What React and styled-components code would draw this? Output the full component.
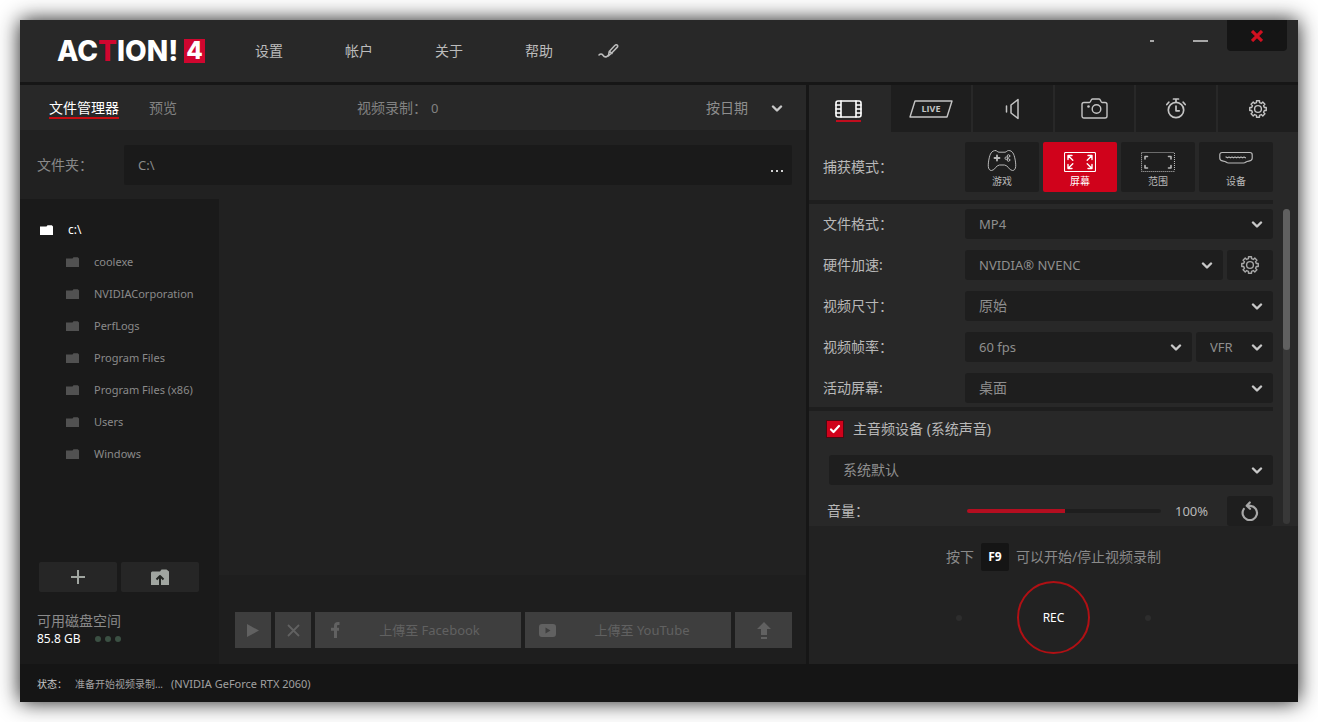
import React, { useState } from "react";
import styled, { createGlobalStyle, css } from "styled-components";

const Global = createGlobalStyle`
  *, *::before, *::after { box-sizing: border-box; }
  body {
    margin: 0;
    background: #fff;
    font-family: "Noto Sans", "Noto Sans CJK SC", sans-serif;
    font-size: 14px;
    line-height: 20px;
    color: #b8b8b8;
  }
  button, input, select {
    font: inherit;
    color: inherit;
    border: 0;
    padding: 0;
    margin: 0;
    background: none;
    border-radius: 0;
  }
  svg { display: block; flex: none; }
`;

const Page = styled.div`
  min-height: 100vh;
  padding: 20px;
  display: flex;
`;

const Window = styled.div`
  flex: 1;
  min-width: 0;
  display: flex;
  flex-direction: column;
  background: #212121;
  box-shadow: 0 0 20px rgba(0, 0, 0, 0.9);
`;

/* ---------- header ---------- */

const Header = styled.header`
  display: flex;
  align-items: center;
  height: 65px;
  padding-left: 37px;
  background: #282828;
  border-bottom: 3px solid #161616;
`;

const Logo = styled.div`
  display: flex;
  align-items: center;
  width: 148px;
  color: #fff;
  font-family: Inter, Roboto, sans-serif;
  font-size: 28px;
  font-weight: 800;
  line-height: 24px;
  em { color: #d0062f; font-style: normal; }
`;

const LogoBadge = styled.span`
  width: 21px;
  height: 24px;
  margin-left: auto;
  background: #d0062f;
  font-size: 24px;
  text-align: center;
`;

const Nav = styled.nav`
  display: flex;
  align-items: center;
  margin-left: 19px;
`;

const NavLink = styled.a`
  display: flex;
  justify-content: center;
  width: ${(p) => (p.$narrow ? 48 : 90)}px;
  color: #bcbcbc;
  text-decoration: none;
`;

const WindowControls = styled.div`
  align-self: flex-start;
  display: flex;
  margin-left: auto;
  margin-right: 11px;
`;

const WindowButton = styled.button`
  display: flex;
  align-items: center;
  justify-content: center;
  width: 48px;
  height: 42px;
  color: #a8a8a8;
  ${(p) =>
    p.$close &&
    css`
      width: 60px;
      height: 31px;
      margin-left: 3px;
      background: #151515;
      border-radius: 0 0 4px 4px;
      color: #d01020;
    `}
`;

/* ---------- body ---------- */

const Body = styled.div`
  flex: 1;
  display: flex;
`;

const Library = styled.section`
  flex: 1;
  min-width: 0;
  display: flex;
  flex-direction: column;
  border-right: 3px solid #161616;
`;

const LibraryBar = styled.div`
  display: flex;
  align-items: center;
  height: 45px;
  padding: 0 21px 0 29px;
  background: #282828;
  color: #828282;
`;

const TabList = styled.div`
  display: flex;
  gap: 30px;
`;

const TextTab = styled.button`
  line-height: 22px;
  color: #828282;
  &[aria-selected="true"] {
    color: #fff;
    box-shadow: inset 0 -2px #c80d12;
  }
`;

const Counter = styled.div`
  display: flex;
  gap: 4px;
  margin: 0 auto 0 180px;
  span + span { font-size: 13px; }
`;

const PathRow = styled.div`
  display: flex;
  align-items: center;
  height: 69px;
  padding: 0 14px 0 17px;
  color: #8a8a8a;
  label { width: 87px; }
`;

const PathField = styled.div`
  flex: 1;
  display: flex;
  height: 40px;
  border-radius: 2px;
  background: #1a1a1a;
  input {
    flex: 1;
    min-width: 0;
    padding-left: 14px;
    font-size: 13px;
  }
  button {
    display: flex;
    align-items: center;
    padding: 13px 8px 0;
    color: #d0d0d0;
  }
`;

const LibraryBody = styled.div`
  flex: 1;
  display: flex;
`;

const Sidebar = styled.aside`
  display: flex;
  flex-direction: column;
  width: 199px;
  padding-top: 15px;
  background: #1a1a1a;
`;

const Tree = styled.ul`
  flex: 1;
  margin: 0;
  padding: 0;
  list-style: none;
`;

const TreeItem = styled.li`
  display: flex;
  align-items: center;
  gap: 15px;
  height: 32px;
  padding-left: ${(p) => (p.$root ? 20 : 46)}px;
  font-size: ${(p) => (p.$root ? 12 : 11)}px;
  color: ${(p) => (p.$root ? "#fff" : "#8a8a8a")};
  svg { color: ${(p) => (p.$root ? "#fff" : "#515151")}; }
`;

const FolderButtons = styled.div`
  display: flex;
  gap: 4px;
  padding: 0 20px 0 19px;
`;

const FolderButton = styled.button`
  flex: 1;
  display: flex;
  align-items: center;
  justify-content: center;
  height: 30px;
  border-radius: 2px;
  background: #262626;
  color: #a0a5a0;
`;

const DiskSpace = styled.div`
  padding: 19px 17px 17px;
  color: #8a8a8a;
`;

const DiskValue = styled.div`
  display: flex;
  align-items: center;
  gap: 15px;
  line-height: 16px;
  font-size: 12px;
  color: #fff;
`;

const Dots = styled.span`
  display: flex;
  gap: 4px;
  i {
    width: 6px;
    height: 6px;
    border-radius: 3px;
    background: #3b5043;
  }
`;

const Content = styled.div`
  flex: 1;
  min-width: 0;
  display: flex;
  flex-direction: column;
`;

const FileArea = styled.div`
  flex: 1;
`;

const ActionBar = styled.div`
  display: flex;
  gap: 4px;
  padding: 37px 14px 16px 16px;
  background: #1e1e1e;
`;

const ActionButton = styled.button`
  display: flex;
  align-items: center;
  justify-content: center;
  width: ${(p) => p.$width || 36}px;
  height: 36px;
  background: #3e3e3e;
  color: #616161;
`;

const UploadButton = styled(ActionButton)`
  flex: 1;
  padding: 0 14px;
  font-family: "Noto Sans", "Noto Sans CJK TC", sans-serif;
  font-size: 13px;
  span {
    flex: 1;
    padding-left: 11px;
  }
`;

/* ---------- recorder ---------- */

const Recorder = styled.section`
  display: flex;
  flex-direction: column;
  width: 489px;
  background: #282828;
`;

const IconTabs = styled.div`
  display: grid;
  grid-template-columns: repeat(6, 1fr);
  gap: 2px;
`;

const IconTab = styled.button`
  position: relative;
  display: flex;
  align-items: center;
  justify-content: center;
  height: 47px;
  background: #1e1e1e;
  color: #c4c4c4;
  &[aria-selected="true"] {
    background: #282828;
    color: #fff;
  }
  &[aria-selected="true"]::after {
    content: "";
    position: absolute;
    bottom: 10px;
    width: 25px;
    height: 2px;
    background: #c00d1e;
  }
`;

const ModeRow = styled.div`
  display: flex;
  align-items: center;
  height: 68px;
  padding: 2px 0 0 14px;
  > span { width: 142px; }
`;

const Modes = styled.div`
  display: flex;
  gap: 4px;
`;

const ModeButton = styled.button`
  display: flex;
  flex-direction: column;
  align-items: center;
  gap: 1px;
  width: 74px;
  height: 50px;
  padding-top: 7px;
  border-radius: 2px;
  background: #1e1e1e;
  color: #b8b8b8;
  font-size: 10px;
  line-height: 16px;
  &[aria-pressed="true"] {
    background: #d0021b;
    color: #fff;
  }
`;

const Scroller = styled.div`
  display: flex;
  height: 326px;
  overflow: hidden;
`;

const Settings = styled.div`
  width: 464px;
`;

const Rule = styled.hr`
  height: 4px;
  margin: ${(p) => (p.$spaced ? "4px 0 8px" : "0 0 5px")};
  border: 0;
  background: #1e1e1e;
`;

const Rows = styled.div`
  display: flex;
  flex-direction: column;
  gap: 11px;
`;

const AudioRows = styled(Rows)`
  margin-top: 16px;
`;

const Row = styled.div`
  display: flex;
  align-items: center;
  gap: 4px;
  height: 30px;
  padding-left: ${(p) => p.$indent || 14}px;
  > label:first-child { width: ${(p) => (p.$indent ? 136 : 138)}px; flex: none; }
`;

const SelectBox = styled.span`
  flex: ${(p) => (p.$width ? "none" : "1")};
  width: ${(p) => (p.$width ? p.$width + "px" : "auto")};
  display: grid;
  align-items: center;
  height: 30px;
  border-radius: 3px;
  background: ${(p) => (p.$bare ? "none" : "#1e1e1e")};
  color: #8e8e8e;
  select {
    grid-area: 1 / 1;
    appearance: none;
    width: 100%;
    height: 30px;
    padding-left: ${(p) => (p.$bare ? 0 : 14)}px;
    font-size: ${(p) => (p.$latin ? 13 : 14)}px;
  }
  svg {
    grid-area: 1 / 1;
    justify-self: end;
    margin-right: ${(p) => (p.$bare ? 2 : 10)}px;
    color: #c8c8c8;
    pointer-events: none;
  }
`;

const SquareButton = styled.button`
  display: flex;
  align-items: center;
  justify-content: center;
  width: 46px;
  height: 30px;
  border-radius: 3px;
  background: #1e1e1e;
  color: #a8a8a8;
`;

const CheckRow = styled.label`
  display: flex;
  align-items: center;
  gap: 10px;
  height: 20px;
  padding-left: 18px;
`;

const CheckBox = styled.span`
  display: grid;
  place-items: center;
  width: 16px;
  height: 16px;
  background: #d0021b;
  color: #fff;
  box-shadow: 0 0 0 1px #4a0a12;
  input {
    grid-area: 1 / 1;
    appearance: none;
    width: 16px;
    height: 16px;
  }
  svg { grid-area: 1 / 1; pointer-events: none; }
`;

const Slider = styled.input`
  appearance: none;
  flex: 1;
  min-width: 0;
  height: 4px;
  margin-right: 10px;
  border-radius: 2px;
  &::-webkit-slider-thumb {
    appearance: none;
    width: 1px;
    height: 4px;
    background: #b40e20;
  }
`;

const VolumeValue = styled.output`
  width: 48px;
  font-size: 13px;
`;

const ScrollTrack = styled.div`
  width: 7px;
  height: 315px;
  margin: 9px 0 0 10px;
  border-radius: 4px;
  background: #383838;
`;

const ScrollThumb = styled.div`
  height: 141px;
  border-radius: 4px;
  background: #606060;
`;

const RecordPanel = styled.div`
  flex: 1;
  display: flex;
  flex-direction: column;
  align-items: center;
  gap: 10px;
  padding-top: 17px;
  background: #222;
`;

const Hint = styled.p`
  display: flex;
  align-items: center;
  gap: 7px;
  margin: 0;
  color: #8a8a8a;
`;

const Key = styled.kbd`
  width: 28px;
  height: 28px;
  border-radius: 2px;
  background: #151515;
  color: #fff;
  font: bold 12px/28px "Noto Sans", sans-serif;
  text-align: center;
`;

const RecordRow = styled.div`
  display: flex;
  align-items: center;
  gap: 55px;
  i {
    width: 6px;
    height: 6px;
    border-radius: 3px;
    background: #2d2d2d;
  }
`;

const RecordButton = styled.button`
  width: 73px;
  height: 73px;
  border: 2px solid #b01014;
  border-radius: 50%;
  color: #fff;
  font-size: 12px;
`;

/* ---------- status ---------- */

const StatusBar = styled.footer`
  display: flex;
  align-items: center;
  gap: 8px;
  height: 38px;
  padding: 2px 0 0 17px;
  background: #151515;
  color: #a0a0a0;
  font-size: 10px;
  span:first-child { color: #c8c8c8; }
  span:last-child { font-size: 11px; }
`;

/* ---------- icons ---------- */

const Icon = ({ w, h, sw = 1.5, children }) => (
  <svg width={w} height={h} viewBox={`0 0 ${w} ${h}`} fill="none" stroke="currentColor" strokeWidth={sw} strokeLinecap="round" strokeLinejoin="round" aria-hidden="true">
    {children}
  </svg>
);

const Chevron = () => (
  <Icon w={12} h={8} sw={2.4}><path d="M2 2.500l4 4 4-4" /></Icon>
);

const Pen = () => (
  <Icon w={21} h={16} sw={1.5}>
    <path d="M1 12c1.300-1.500 2.800-1.500 3.800 0s2.200 2.500 4 1.500l1.600-1" />
    <path d="M10.400 12.800l.8-4.400 5.800-6.200c.8-.9 2-.6 2.500.2.4.7.2 1.400-.4 2l-5.900 6.100z M11.600 8.200l2.400 2.300" />
  </Icon>
);

const Film = () => (
  <Icon w={27} h={18} sw={1.6}>
    <rect x="1" y="1" width="25" height="16" rx="2" />
    <path d="M6 1v16M21 1v16M1 5h5M1 9h5M1 13h5M21 5h5M21 9h5M21 13h5" />
  </Icon>
);

const Live = () => (
  <Icon w={44} h={18} sw={1.4}>
    <path d="M6 1h37l-5 16H1z" />
    <text x="22" y="12" textAnchor="middle" fill="currentColor" stroke="none" fontFamily="Open Sans" fontWeight="700" fontSize="9">LIVE</text>
  </Icon>
);

const Speaker = () => (
  <Icon w={16} h={22} sw={1.5}>
    <path d="M13 1.500v19L6 15V7z" />
    <path d="M1.500 8v6" />
  </Icon>
);

const Camera = () => (
  <Icon w={27} h={21} sw={1.4}>
    <path d="M3 4.500h5.500c1.500 0 1.200-3.500 3-3.500h6.500c1.800 0 1.500 3.500 3 3.500h3c1.200 0 2 .8 2 2v11.500c0 1.200-.8 2-2 2H3c-1.200 0-2-.8-2-2V6.500c0-1.200.8-2 2-2z" />
    <circle cx="15.500" cy="11" r="4.300" />
    <circle cx="7.500" cy="8.500" r="1.300" fill="currentColor" stroke="none" />
  </Icon>
);

const Timer = () => (
  <Icon w={20} h={21} sw={1.7}>
    <circle cx="10" cy="12" r="7.700" />
    <path d="M10 8v4.800h3.200M7.500 1h5M10 1v3M.8 6.500l2-2.300M19.200 6.500l-2-2.300" />
  </Icon>
);

const gearPath = (() => {
  const teeth = 8;
  const pts = [];
  for (let i = 0; i < teeth; i++) {
    const c = (i * 2 * Math.PI) / teeth;
    [[-0.24, 6.5], [-0.18, 8.4], [0.18, 8.4], [0.24, 6.5]].forEach(([d, r]) =>
      pts.push(`${(10 + r * Math.sin(c + d)).toFixed(2)} ${(10 - r * Math.cos(c + d)).toFixed(2)}`)
    );
  }
  return `M${pts.join("L")}Z`;
})();

const Gear = () => (
  <Icon w={20} h={20} sw={1.4}>
    <path d={gearPath} />
    <circle cx="10" cy="10" r="3.400" />
  </Icon>
);

const Gamepad = () => (
  <Icon w={30} h={23} sw={1}>
    <path d="M8.500 1.500c1.500 0 2 1.700 3.500 1.700h6c1.500 0 2-1.700 3.500-1.700 4 0 5.500 3.500 6.500 8.500s1.600 11.500-2.500 11.500c-3.500 0-4.500-5.500-8-5.500h-5c-3.500 0-4.500 5.500-8 5.500C.4 21.500 1 15 2 10s2.500-8.500 6.500-8.500z" />
    <path d="M10 6.500v5M7.500 9h5" strokeWidth="1.800" />
    <circle cx="21.500" cy="7" r="1.300" /><circle cx="19.300" cy="9.200" r="1.300" /><circle cx="21.500" cy="11" r="1.300" />
  </Icon>
);

const Screen = () => (
  <Icon w={32} h={23} sw={1.100}>
    <rect x=".5" y="3.500" width="31" height="19" rx="1" />
    <path d="M4 10.500V6.500h4M4.300 6.800l4.500 4.500M28 10.500V6.500h-4M27.700 6.800l-4.500 4.500M4 15.500v4h4M4.300 19.200l4.500-4.500M28 15.500v4h-4M27.700 19.200l-4.500-4.500" strokeWidth="1.400" />
  </Icon>
);

const Region = () => (
  <Icon w={34} h={23} sw={1.100}>
    <rect x=".5" y="3.500" width="33" height="19" rx="1" strokeDasharray="1 1" strokeLinecap="butt" />
    <path d="M4 10V7.500h2.500M30 10V7.500h-2.500M4 16.500v2.500h2.500M30 16.500v2.500h-2.500" strokeWidth="1.600" />
  </Icon>
);

const Hdmi = () => (
  <Icon w={34} h={23} sw={1.2}>
    <path d="M3 3.500h28c1.300 0 2.200.9 2.200 2.200v3.600c0 3.400-4.200 2.200-6.200 3.700-.9.700-1.500 1-2.500 1h-15c-1 0-1.600-.3-2.500-1-2-1.500-6.200-.3-6.200-3.700V5.700c0-1.300.9-2.200 2.200-2.200z" />
    <path d="M7 8l1.500.8 1.500-.8 1.500.8 1.500-.8 1.500.8 1.500-.8 1.500.8 1.500-.8 1.500.8 1.500-.8 1.500.8 1.500-.8 1.500.8" />
  </Icon>
);

const Reset = () => (
  <Icon w={20} h={20} sw={2.200}>
    <path d="M3.800 8A7.200 7.200 0 1 0 10.500 4.800H7M9.800 1.500L6.700 4.800l3.300 3" />
  </Icon>
);

const Folder = () => (
  <Icon w={13} h={10}>
    <path fill="currentColor" stroke="none" d="M0 1.500h6.500L7.500 .3h4.300l1.200 1.200V10H0z" />
  </Icon>
);

const Plus = () => <Icon w={14} h={14} sw={2}><path strokeLinecap="butt" d="M7 0v14M0 7h14" /></Icon>;

const FolderUp = () => (
  <Icon w={18} h={16} sw={2}>
    <path fill="currentColor" stroke="none" d="M1 2.500h8l1.500-2h5L18 2.500V16H0V3.500z" />
    <path stroke="#232623" strokeLinecap="butt" d="M9 16V8M5.500 10.500L9 7l3.500 3.500" />
  </Icon>
);

const Play = () => <Icon w={12} h={13}><path fill="currentColor" stroke="none" d="M0 0l12 6.500L0 13z" /></Icon>;
const Cross = ({ size = 13, sw = 1.8 }) => (
  <Icon w={size} h={size} sw={sw}><path strokeLinecap="butt" d={`M1 1L${size - 1} ${size - 1}M${size - 1} 1L1 ${size - 1}`} /></Icon>
);
const Facebook = () => (
  <Icon w={12} h={16} sw={3}><path strokeLinecap="butt" strokeLinejoin="miter" d="M10.500 1.500H9C7.500 1.500 6.500 2.500 6.500 4v12M2 7.200h8" /></Icon>
);
const YouTube = () => (
  <Icon w={17} h={13}>
    <path fill="currentColor" stroke="none" fillRule="evenodd" d="M3 0h11a3 3 0 0 1 3 3v7a3 3 0 0 1-3 3H3a3 3 0 0 1-3-3V3a3 3 0 0 1 3-3zm3.500 3.500v6l5-3z" />
  </Icon>
);
const Upload = () => (
  <Icon w={14} h={17}><path fill="currentColor" stroke="none" d="M7 0l7 7h-4v6H4V7H0zM4 15h6v2H4z" /></Icon>
);
const Tick = () => <Icon w={12} h={12} sw={2.200}><path d="M2 6.500L4.500 9l5.500-6" /></Icon>;
const Ellipsis = () => (
  <Icon w={14} h={3}><path fill="currentColor" stroke="none" d="M1 0h2v2H1zM6 0h2v2H6zM11 0h2v2h-2z" /></Icon>
);
const Dash = ({ w }) => <Icon w={w} h={2} sw={2}><path strokeLinecap="butt" d={`M0 1h${w}`} /></Icon>;

/* ---------- app ---------- */

const folders = ["coolexe", "NVIDIACorporation", "PerfLogs", "Program Files", "Program Files (x86)", "Users", "Windows"];

const recorderTabs = [
  ["视频", Film],
  ["直播", Live],
  ["音频", Speaker],
  ["截图", Camera],
  ["定时", Timer],
  ["选项", Gear],
];

const modes = [
  ["游戏", Gamepad],
  ["屏幕", Screen],
  ["范围", Region],
  ["设备", Hdmi],
];

const Select = ({ id, label, value, ...box }) => (
  <SelectBox {...box}>
    <select id={id} aria-label={label}>
      <option>{value}</option>
    </select>
    <Chevron />
  </SelectBox>
);

export default function App() {
  const [tab, setTab] = useState(0);
  const [mode, setMode] = useState(1);
  const [volume, setVolume] = useState(100);
  const [path, setPath] = useState("C:\\");
  const fill = volume / 2;

  return (
    <Page>
      <Global />
      <Window>
        <Header>
          <Logo>
            <span>AC<em>T</em>ION!</span>
            <LogoBadge>4</LogoBadge>
          </Logo>
          <Nav>
            <NavLink href="#settings">设置</NavLink>
            <NavLink href="#account">帐户</NavLink>
            <NavLink href="#about">关于</NavLink>
            <NavLink href="#help">帮助</NavLink>
            <NavLink href="#draw" $narrow aria-label="绘图"><Pen /></NavLink>
          </Nav>
          <WindowControls>
            <WindowButton aria-label="迷你"><Dash w={4} /></WindowButton>
            <WindowButton aria-label="最小化"><Dash w={15} /></WindowButton>
            <WindowButton $close aria-label="关闭"><Cross size={12} sw={3.2} /></WindowButton>
          </WindowControls>
        </Header>

        <Body>
          <Library>
            <LibraryBar>
              <TabList role="tablist">
                <TextTab role="tab" aria-selected="true">文件管理器</TextTab>
                <TextTab role="tab" aria-selected="false">预览</TextTab>
              </TabList>
              <Counter><span>视频录制：</span><span>0</span></Counter>
              <Select label="排序" value="按日期" $bare $width={79} />
            </LibraryBar>
            <PathRow>
              <label htmlFor="path">文件夹：</label>
              <PathField>
                <input id="path" value={path} onChange={(e) => setPath(e.target.value)} />
                <button aria-label="浏览"><Ellipsis /></button>
              </PathField>
            </PathRow>
            <LibraryBody>
              <Sidebar>
                <Tree>
                  <TreeItem $root><Folder />c:\</TreeItem>
                  {folders.map((name) => (
                    <TreeItem key={name}><Folder />{name}</TreeItem>
                  ))}
                </Tree>
                <FolderButtons>
                  <FolderButton aria-label="添加"><Plus /></FolderButton>
                  <FolderButton aria-label="上级文件夹"><FolderUp /></FolderButton>
                </FolderButtons>
                <DiskSpace>
                  可用磁盘空间
                  <DiskValue>85.8 GB<Dots><i /><i /><i /></Dots></DiskValue>
                </DiskSpace>
              </Sidebar>
              <Content>
                <FileArea />
                <ActionBar>
                  <ActionButton aria-label="播放"><Play /></ActionButton>
                  <ActionButton aria-label="删除"><Cross /></ActionButton>
                  <UploadButton><Facebook /><span>上傳至 Facebook</span></UploadButton>
                  <UploadButton><YouTube /><span>上傳至 YouTube</span></UploadButton>
                  <ActionButton $width={57} aria-label="上传"><Upload /></ActionButton>
                </ActionBar>
              </Content>
            </LibraryBody>
          </Library>

          <Recorder>
            <IconTabs role="tablist">
              {recorderTabs.map(([name, Glyph], i) => (
                <IconTab key={name} role="tab" aria-label={name} aria-selected={tab === i} onClick={() => setTab(i)}>
                  <Glyph />
                </IconTab>
              ))}
            </IconTabs>
            <ModeRow>
              <span>捕获模式：</span>
              <Modes>
                {modes.map(([name, Glyph], i) => (
                  <ModeButton key={name} aria-pressed={mode === i} onClick={() => setMode(i)}>
                    <Glyph />
                    {name}
                  </ModeButton>
                ))}
              </Modes>
            </ModeRow>
            <Scroller>
              <Settings>
                <Rule />
                <Rows>
                  <Row>
                    <label htmlFor="format">文件格式：</label>
                    <Select id="format" value="MP4" $latin />
                  </Row>
                  <Row>
                    <label htmlFor="accel">硬件加速:</label>
                    <Select id="accel" value="NVIDIA® NVENC" $latin />
                    <SquareButton aria-label="加速设置"><Gear /></SquareButton>
                  </Row>
                  <Row>
                    <label htmlFor="size">视频尺寸：</label>
                    <Select id="size" value="原始" />
                  </Row>
                  <Row>
                    <label htmlFor="fps">视频帧率：</label>
                    <Select id="fps" value="60 fps" $latin />
                    <Select label="帧率模式" value="VFR" $latin $width={77} />
                  </Row>
                  <Row>
                    <label htmlFor="screen">活动屏幕:</label>
                    <Select id="screen" value="桌面" />
                  </Row>
                </Rows>
                <Rule $spaced />
                <CheckRow>
                  <CheckBox><input type="checkbox" defaultChecked /><Tick /></CheckBox>
                  主音频设备 (系统声音)
                </CheckRow>
                <AudioRows>
                  <Row $indent={20}>
                    <Select label="音频设备" value="系统默认" />
                  </Row>
                  <Row $indent={18}>
                    <label htmlFor="volume">音量：</label>
                    <Slider
                      id="volume"
                      type="range"
                      min="0"
                      max="200"
                      value={volume}
                      onChange={(e) => setVolume(Number(e.target.value))}
                      style={{ background: `linear-gradient(to right, #b40e20 ${fill}%, #1e1e1e ${fill}%)` }}
                    />
                    <VolumeValue htmlFor="volume">{volume}%</VolumeValue>
                    <SquareButton aria-label="重置"><Reset /></SquareButton>
                  </Row>
                </AudioRows>
              </Settings>
              <ScrollTrack><ScrollThumb /></ScrollTrack>
            </Scroller>
            <RecordPanel>
              <Hint>按下<Key>F9</Key>可以开始/停止视频录制</Hint>
              <RecordRow>
                <i />
                <RecordButton>REC</RecordButton>
                <i />
              </RecordRow>
            </RecordPanel>
          </Recorder>
        </Body>

        <StatusBar>
          <span>状态：</span>
          <span>准备开始视频录制...</span>
          <span>(NVIDIA GeForce RTX 2060)</span>
        </StatusBar>
      </Window>
    </Page>
  );
}
